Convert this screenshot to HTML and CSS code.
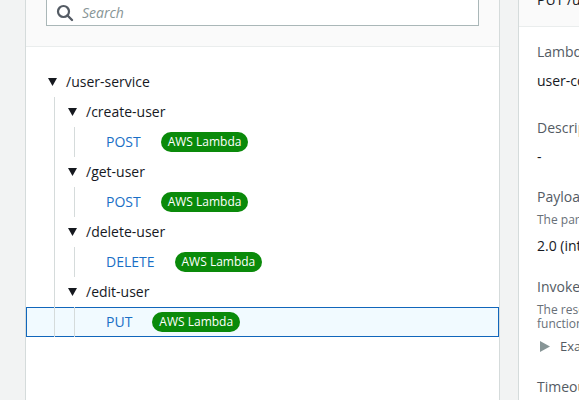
FILE: index.html
```html
<!DOCTYPE html>
<html>
<head>
<meta charset="utf-8">
<title>Routes</title>
<link rel="stylesheet" href="styles.css">
</head>
<body>
<div class="layout">
  <div class="gutter"></div>
  <section class="tree-panel">
    <div class="tree-head">
      <div class="search">
        <svg class="search-icon" width="18" height="18" viewBox="0 0 18 18"><circle cx="7.5" cy="7.5" r="5.5" fill="none" stroke="#545b64" stroke-width="2.2"/><line x1="11.5" y1="11.5" x2="16" y2="16" stroke="#545b64" stroke-width="2.4" stroke-linecap="round"/></svg>
        <span class="placeholder">Search</span>
      </div>
    </div>
    <div class="tree">
      <div class="row">
        <span class="toggle"><svg width="9" height="8" viewBox="0 0 9 8"><polygon points="0,0 9,0 4.5,8" fill="#16191f"/></svg></span>
        <span class="path">/user-service</span>
      </div>
      <div class="row">
        <span class="guide"></span>
        <span class="toggle"><svg width="9" height="8" viewBox="0 0 9 8"><polygon points="0,0 9,0 4.5,8" fill="#16191f"/></svg></span>
        <span class="path">/create-user</span>
      </div>
      <div class="row">
        <span class="guide"></span><span class="guide"></span>
        <span class="method">POST</span><span class="badge">AWS Lambda</span>
      </div>
      <div class="row">
        <span class="guide"></span>
        <span class="toggle"><svg width="9" height="8" viewBox="0 0 9 8"><polygon points="0,0 9,0 4.5,8" fill="#16191f"/></svg></span>
        <span class="path">/get-user</span>
      </div>
      <div class="row">
        <span class="guide"></span><span class="guide"></span>
        <span class="method">POST</span><span class="badge">AWS Lambda</span>
      </div>
      <div class="row">
        <span class="guide"></span>
        <span class="toggle"><svg width="9" height="8" viewBox="0 0 9 8"><polygon points="0,0 9,0 4.5,8" fill="#16191f"/></svg></span>
        <span class="path">/delete-user</span>
      </div>
      <div class="row">
        <span class="guide"></span><span class="guide"></span>
        <span class="method">DELETE</span><span class="badge">AWS Lambda</span>
      </div>
      <div class="row">
        <span class="guide"></span>
        <span class="toggle"><svg width="9" height="8" viewBox="0 0 9 8"><polygon points="0,0 9,0 4.5,8" fill="#16191f"/></svg></span>
        <span class="path">/edit-user</span>
      </div>
      <div class="row selected">
        <span class="guide"></span><span class="guide"></span>
        <span class="method">PUT</span><span class="badge">AWS Lambda</span>
      </div>
    </div>
  </section>
  <div class="gap"></div>
  <section class="detail-panel">
    <div class="detail-head"><span class="detail-title">PUT /user-service/edit-user</span></div>
    <div class="detail-body">
      <div class="label">Lambda function</div>
      <div class="value v-first">user-controller</div>
      <div class="label l-desc">Description</div>
      <div class="value v-dash">-</div>
      <div class="label l-payload">Payload format version</div>
      <div class="desc d-payload">The parsed payload format that API Gateway sends to your function</div>
      <div class="value v-payload">2.0 (interpreted response format)</div>
      <div class="label l-invoke">Invoke permission</div>
      <div class="desc d-invoke">The resource-based policy that grants API Gateway access to your Lambda<br>function. It is added automatically.</div>
      <div class="expander"><svg width="10" height="11" viewBox="0 0 10 11"><polygon points="0,0 10,5.5 0,11" fill="#879596"/></svg><span>Example policy statement</span></div>
      <div class="label l-timeout">Timeout</div>
    </div>
  </section>
</div>
</body>
</html>
```

FILE: styles.css
```css
* { box-sizing: border-box; }

html, body {
  margin: 0;
  height: 100%;
  overflow: hidden;
}

body {
  background: #f2f3f3;
  font-family: "Open Sans", "Noto Sans", sans-serif;
  font-size: 14px;
  color: #16191f;
}

.layout {
  display: flex;
  height: 100%;
  width: 900px;
}

.gutter {
  width: 25px;
  flex: none;
}

.tree-panel {
  width: 475px;
  flex: none;
  background: #fff;
  border-left: 1px solid #d5dbdb;
  border-right: 1px solid #d5dbdb;
}

.tree-head {
  display: flow-root;
  height: 47px;
  background: #fafafa;
  border-bottom: 1px solid #eaeded;
  padding: 0 20px;
}

.search {
  margin-top: -6px;
  height: 32px;
  width: 433px;
  border: 1px solid #aab7b8;
  background: #fff;
  display: flex;
  align-items: center;
  padding: 6px 0 0 9px;
}

.search-icon {
  flex: none;
}

.placeholder {
  margin-left: 8px;
  font-style: italic;
  color: #879596;
  line-height: 20px;
}

.tree {
  padding-top: 20px;
}

.row {
  display: flex;
  align-items: center;
  height: 30px;
  padding-left: 18px;
  line-height: 20px;
}

.row.selected {
  background: #f1faff;
  box-shadow: inset 0 0 0 1px #1166bb;
}

.guide {
  width: 20px;
  align-self: stretch;
  flex: none;
  background: linear-gradient(#d5dbdb, #d5dbdb) no-repeat 10px 0 / 1px 100%;
}

.toggle {
  width: 22px;
  flex: none;
  display: flex;
  align-items: center;
  padding-left: 4px;
}

.toggle svg {
  display: block;
}

.method {
  margin-left: 22px;
  color: #1a6fc6;
}

.badge {
  margin-left: 20px;
  height: 20px;
  line-height: 20px;
  padding: 0 7px;
  border-radius: 10px;
  background: #0a8a0a;
  color: #fff;
  font-size: 12px;
}

.gap {
  width: 18px;
  flex: none;
}

.detail-panel {
  width: 340px;
  flex: none;
  background: #fff;
  border-left: 1px solid #d5dbdb;
  white-space: nowrap;
}

.detail-head {
  height: 27px;
  background: #fafafa;
  border-bottom: 1px solid #eaeded;
  padding: 0 18px;
  overflow: hidden;
}

.detail-title {
  display: block;
  margin-top: -10px;
  line-height: 20px;
}

.detail-body {
  padding: 15px 18px;
}

.label {
  line-height: 20px;
  color: #545b64;
}

.value {
  line-height: 20px;
  color: #16191f;
}

.desc {
  font-size: 12px;
  color: #687078;
}

.v-first { margin-top: 9px; }
.l-desc { margin-top: 27px; }
.v-dash { margin-top: 9px; }
.l-payload { margin-top: 20px; }
.d-payload { margin-top: 5px; line-height: 16px; }
.v-payload { margin-top: 8px; }
.l-invoke { margin-top: 21px; }
.d-invoke { margin-top: 6px; line-height: 14px; }

.expander {
  margin-top: 5px;
  display: flex;
  align-items: center;
  line-height: 20px;
  font-size: 13px;
  color: #545b64;
  padding-left: 3px;
}

.expander span {
  margin-left: 10px;
}

.l-timeout { margin-top: 21px; }
```
